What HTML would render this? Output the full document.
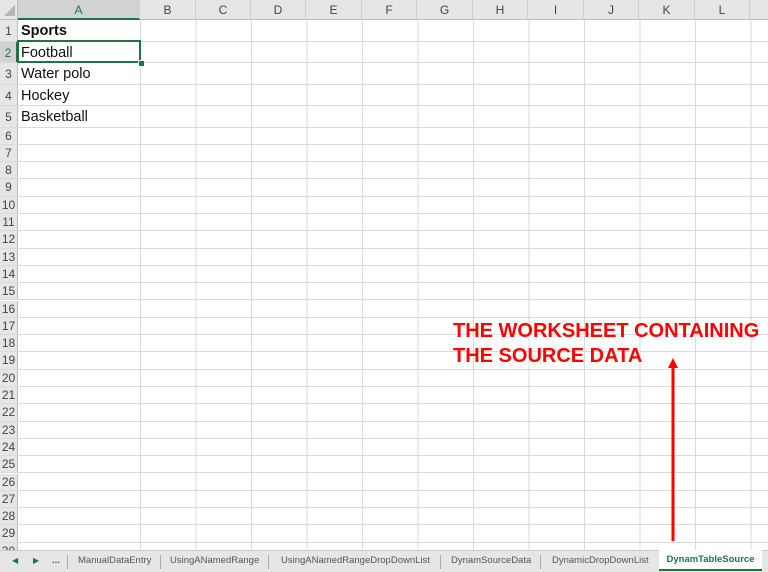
<!DOCTYPE html>
<html><head><style>
body{margin:0;width:768px;height:571px;overflow:hidden;background:#fff;font-family:"Liberation Sans",Arial,sans-serif;position:relative}
.hdr{position:absolute;top:0;left:0;width:768px;height:19px;background:#e6e6e6;border-bottom:1px solid #bdbdbd}
.ch{position:absolute;top:0;height:19px;line-height:20px;text-align:center;font-size:12px;color:#444;border-right:1px solid #cfcfcf;box-sizing:border-box}
.grid{position:absolute;left:140px;top:20px;width:628px;height:530px;background:repeating-linear-gradient(to right,#dadada 0,#dadada 1px,transparent 1px,transparent 55.5px)}
.row{position:absolute;left:0;width:768px;border-bottom:1px solid #dadada;box-sizing:border-box}
.rn{position:absolute;left:0;top:0;width:18px;height:100%;background:#e6e6e6;border-right:1px solid #bdbdbd;box-sizing:border-box;font-size:12px;color:#444;text-align:center}
.big .rn{line-height:22px}
.sm .rn{line-height:17px}
.cell{position:absolute;left:21px;top:0;font-family:"Liberation Sans",Calibri,sans-serif;font-size:14.5px;line-height:22px;color:#111}
.tabs{position:absolute;left:0;top:550px;width:768px;height:21px;background:#e6e6e6;border-top:1px solid #c8c8c8;font-size:9.5px;color:#555}
.tab{position:absolute;top:0;height:21px;line-height:20px}
.sep{position:absolute;top:4px;width:1px;height:14px;background:#aaa}
</style></head><body>
<div class="grid"></div>
<div class="row big" style="top:20px;height:21.5px"><div class="rn">1</div><div class="cell" style="font-weight:bold">Sports</div></div>
<div class="row big" style="top:41.5px;height:21.5px"><div class="rn" style="color:#217346;background:#d2d2d2;border-right:2px solid #217346">2</div><div class="cell">Football</div></div>
<div class="row big" style="top:63px;height:21.5px"><div class="rn">3</div><div class="cell">Water polo</div></div>
<div class="row big" style="top:84.5px;height:21.5px"><div class="rn">4</div><div class="cell">Hockey</div></div>
<div class="row big" style="top:106px;height:21.5px"><div class="rn">5</div><div class="cell">Basketball</div></div>
<div class="row sm" style="top:127.5px;height:17.3px"><div class="rn">6</div></div>
<div class="row sm" style="top:144.8px;height:17.3px"><div class="rn">7</div></div>
<div class="row sm" style="top:162.1px;height:17.3px"><div class="rn">8</div></div>
<div class="row sm" style="top:179.4px;height:17.3px"><div class="rn">9</div></div>
<div class="row sm" style="top:196.7px;height:17.3px"><div class="rn">10</div></div>
<div class="row sm" style="top:214px;height:17.3px"><div class="rn">11</div></div>
<div class="row sm" style="top:231.3px;height:17.3px"><div class="rn">12</div></div>
<div class="row sm" style="top:248.6px;height:17.3px"><div class="rn">13</div></div>
<div class="row sm" style="top:265.9px;height:17.3px"><div class="rn">14</div></div>
<div class="row sm" style="top:283.2px;height:17.3px"><div class="rn">15</div></div>
<div class="row sm" style="top:300.5px;height:17.3px"><div class="rn">16</div></div>
<div class="row sm" style="top:317.8px;height:17.3px"><div class="rn">17</div></div>
<div class="row sm" style="top:335.1px;height:17.3px"><div class="rn">18</div></div>
<div class="row sm" style="top:352.4px;height:17.3px"><div class="rn">19</div></div>
<div class="row sm" style="top:369.7px;height:17.3px"><div class="rn">20</div></div>
<div class="row sm" style="top:387px;height:17.3px"><div class="rn">21</div></div>
<div class="row sm" style="top:404.3px;height:17.3px"><div class="rn">22</div></div>
<div class="row sm" style="top:421.6px;height:17.3px"><div class="rn">23</div></div>
<div class="row sm" style="top:438.9px;height:17.3px"><div class="rn">24</div></div>
<div class="row sm" style="top:456.2px;height:17.3px"><div class="rn">25</div></div>
<div class="row sm" style="top:473.5px;height:17.3px"><div class="rn">26</div></div>
<div class="row sm" style="top:490.8px;height:17.3px"><div class="rn">27</div></div>
<div class="row sm" style="top:508.1px;height:17.3px"><div class="rn">28</div></div>
<div class="row sm" style="top:525.4px;height:17.3px"><div class="rn">29</div></div>
<div class="row sm" style="top:542.7px;height:17.3px"><div class="rn">30</div></div>
<div style="position:absolute;left:17px;top:40px;width:124px;height:23px;border:2px solid #217346;box-sizing:border-box"></div>
<div style="position:absolute;left:138px;top:60px;width:5px;height:5px;background:#217346;border:1px solid #fff"></div>
<div class="hdr">
<div class="ch" style="left:0;width:18px;border-right:1px solid #bdbdbd"></div>
<svg style="position:absolute;left:4px;top:5px" width="12" height="12"><polygon points="11,0 11,11 0,11" fill="#b4b4b4"/></svg>
<div class="ch" style="left:18px;width:122px;background:#d2d2d2;color:#217346;border-bottom:2px solid #217346;height:20px">A</div>
<div class="ch" style="left:140px;width:56px">B</div>
<div class="ch" style="left:196px;width:55px">C</div>
<div class="ch" style="left:251px;width:55px">D</div>
<div class="ch" style="left:306px;width:56px">E</div>
<div class="ch" style="left:362px;width:55px">F</div>
<div class="ch" style="left:417px;width:56px">G</div>
<div class="ch" style="left:473px;width:55px">H</div>
<div class="ch" style="left:528px;width:56px">I</div>
<div class="ch" style="left:584px;width:55px">J</div>
<div class="ch" style="left:639px;width:56px">K</div>
<div class="ch" style="left:695px;width:55px">L</div>
</div>
<div style="position:absolute;left:453px;top:319px;color:#f00;font-weight:bold;font-size:20px;line-height:25px;white-space:nowrap">THE WORKSHEET CONTAINING<br>THE SOURCE DATA</div>
<svg style="position:absolute;left:665px;top:358px" width="16" height="185"><line x1="8" y1="8" x2="8" y2="183" stroke="#f00" stroke-width="3"/><polygon points="8,0 3,10 13,10" fill="#f00"/></svg>
<div class="tabs">
<div class="tab" style="left:12px;font-size:8px;color:#217346">◀</div>
<div class="tab" style="left:33px;font-size:8px;color:#217346">▶</div>
<div class="tab" style="left:52px;color:#217346;font-weight:bold">...</div>
<div class="sep" style="left:67px"></div>
<div class="tab" style="left:78px">ManualDataEntry</div>
<div class="sep" style="left:160px"></div>
<div class="tab" style="left:170px">UsingANamedRange</div>
<div class="sep" style="left:268px"></div>
<div class="tab" style="left:281px">UsingANamedRangeDropDownList</div>
<div class="sep" style="left:440px"></div>
<div class="tab" style="left:451px">DynamSourceData</div>
<div class="sep" style="left:540px"></div>
<div class="tab" style="left:552px">DynamicDropDownList</div>
<div class="tab" style="left:659px;width:103px;background:#fff;color:#217346;font-weight:bold;text-align:center;border-bottom:2px solid #217346;box-sizing:border-box;top:-1px;height:21px">DynamTableSource</div>
</div>
</body></html>
